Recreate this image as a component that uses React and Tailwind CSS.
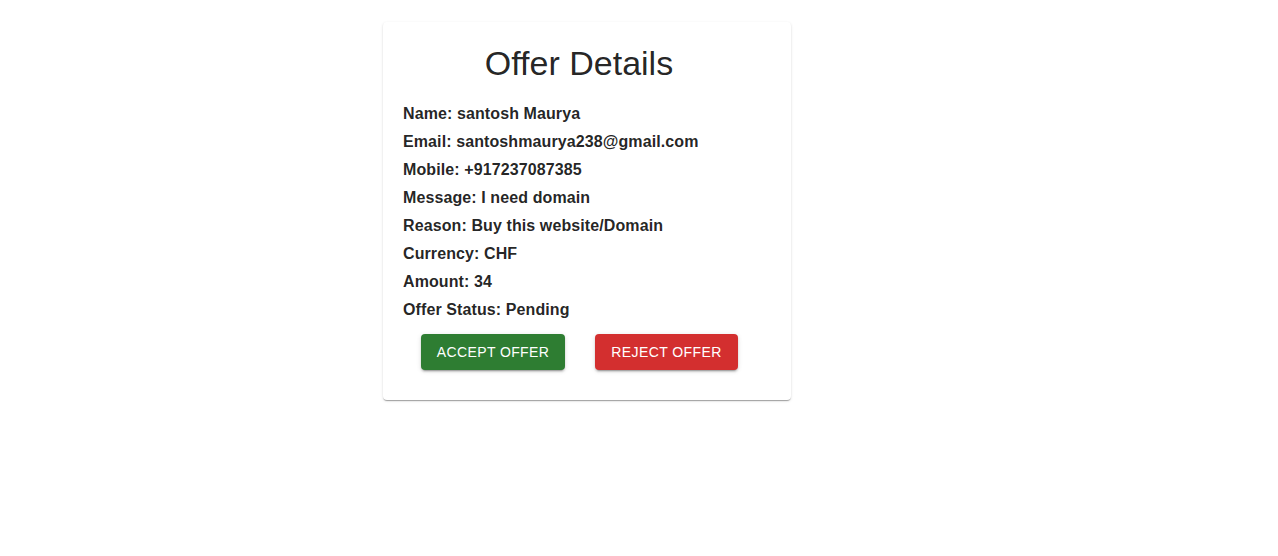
import React from "react";

const rows = [
  ["Name", "santosh Maurya"],
  ["Email", "santoshmaurya238@gmail.com"],
  ["Mobile", "+917237087385"],
  ["Message", "I need domain"],
  ["Reason", "Buy this website/Domain"],
  ["Currency", "CHF"],
  ["Amount", "34"],
  ["Offer Status", "Pending"],
];

export default function App() {
  return (
    <div
      className="min-h-[556px] bg-white pt-[22px] pl-[383px] text-[rgba(0,0,0,0.87)]"
      style={{ fontFamily: '"Liberation Sans", Arial, sans-serif' }}
    >
      {/* Card */}
      <div className="w-[408px] rounded-[4px] bg-white px-5 pt-5 pb-[30px] shadow-[0px_2px_1px_-1px_rgba(0,0,0,0.2),0px_1px_1px_0px_rgba(0,0,0,0.14),0px_1px_3px_0px_rgba(0,0,0,0.12)]">
        <h4 className="mb-[18px] pr-4 text-center text-[34px] leading-[42px] font-normal">
          Offer Details
        </h4>

        <div>
          {rows.map(([label, value]) => (
            <p key={label} className="mb-1 text-base leading-6 font-bold tracking-[0.1px]">
              {label}: {value}
            </p>
          ))}
        </div>

        {/* Actions */}
        <div className="mt-3 ml-[18px] flex gap-[30px]">
          <button className="h-9 w-[144px] whitespace-nowrap rounded-[4px] bg-[#2e7d32] text-sm uppercase tracking-[0.02857em] text-white shadow-[0px_3px_1px_-2px_rgba(0,0,0,0.2),0px_2px_2px_0px_rgba(0,0,0,0.14),0px_1px_5px_0px_rgba(0,0,0,0.12)]">
            Accept Offer
          </button>
          <button className="h-9 w-[143px] whitespace-nowrap rounded-[4px] bg-[#d32f2f] text-sm uppercase tracking-[0.02857em] text-white shadow-[0px_3px_1px_-2px_rgba(0,0,0,0.2),0px_2px_2px_0px_rgba(0,0,0,0.14),0px_1px_5px_0px_rgba(0,0,0,0.12)]">
            Reject Offer
          </button>
        </div>
      </div>
    </div>
  );
}
